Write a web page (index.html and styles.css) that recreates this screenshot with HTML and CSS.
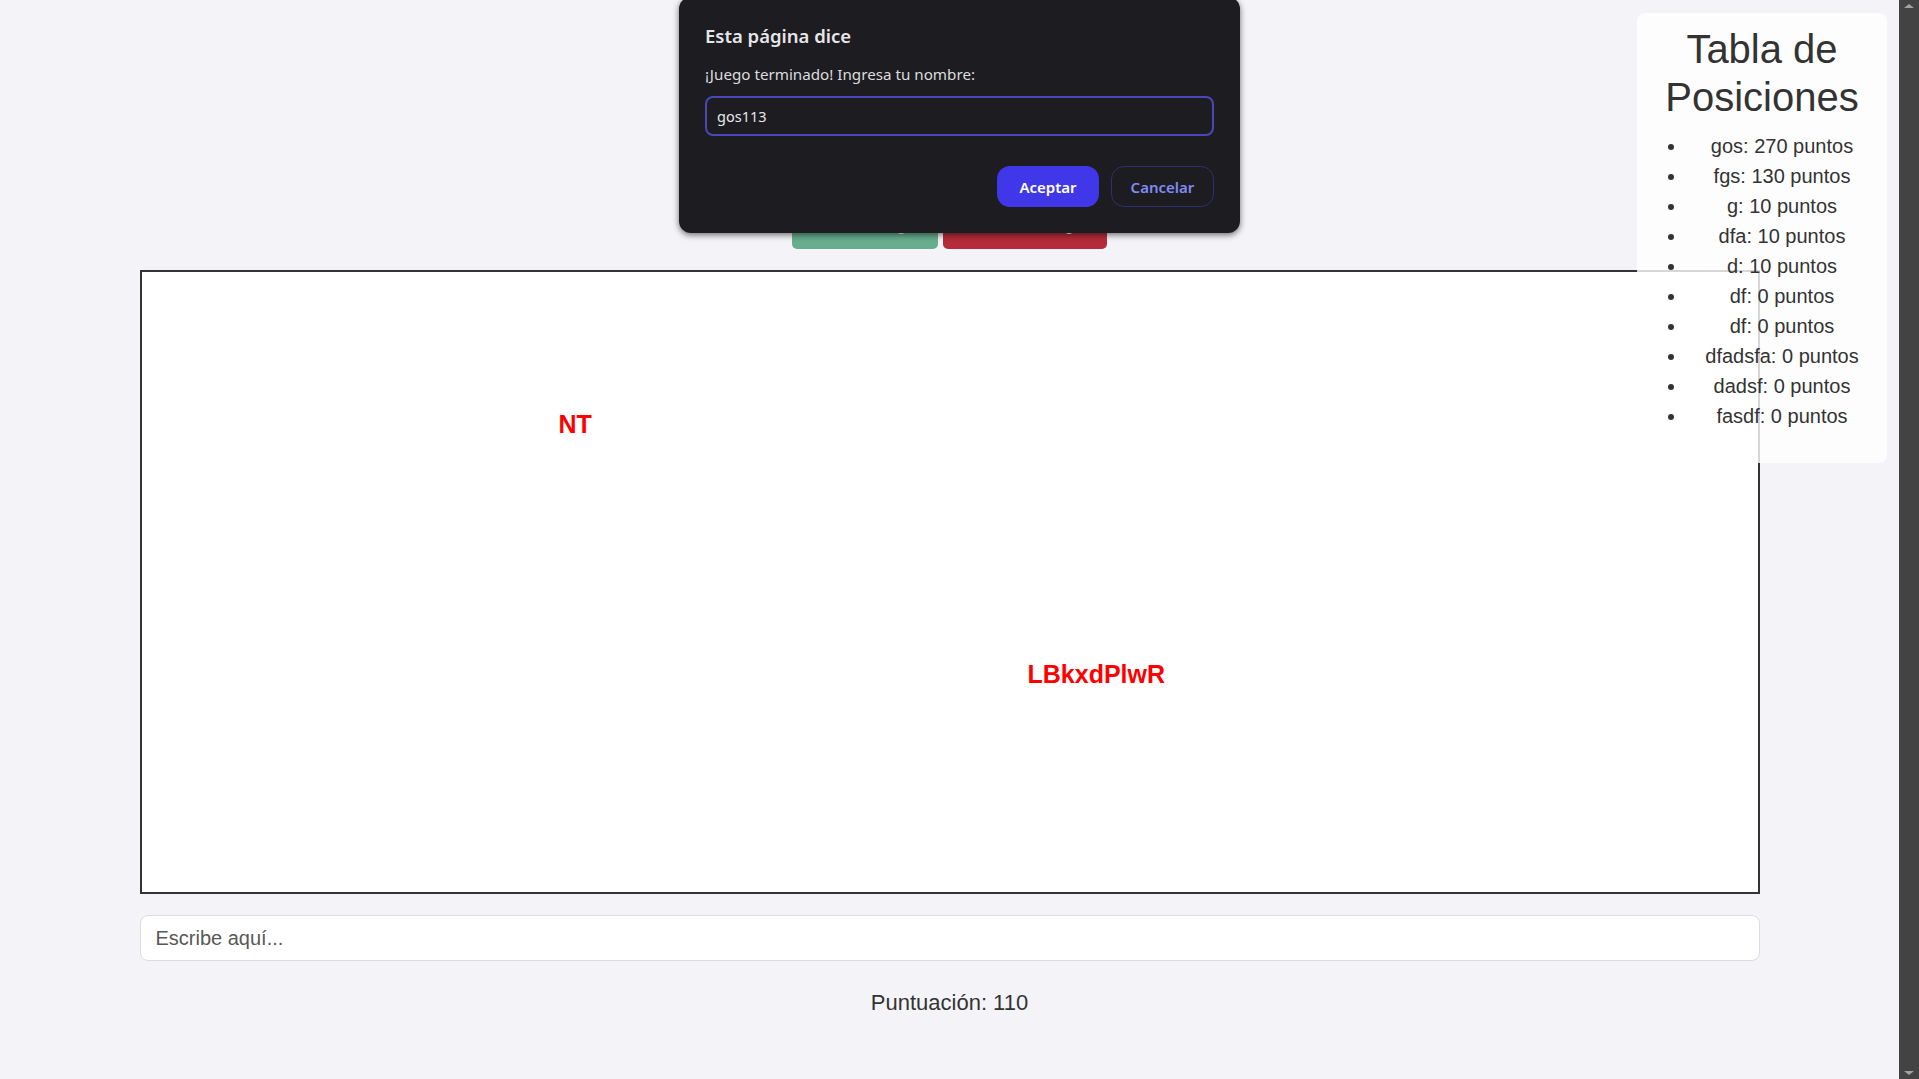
FILE: index.html
```html
<!DOCTYPE html>
<html lang="es">
<head>
<meta charset="utf-8">
<title>Juego de Mecanografía</title>
<link rel="stylesheet" href="styles.css">
</head>
<body>
<div class="page">
  <main class="main">
    <header class="header"></header>
    <div class="controls">
      <button class="btn btn-start">Iniciar Juego</button>
      <button class="btn btn-stop">Detener Juego</button>
    </div>
    <div class="game">
      <span class="word" style="left:417px;top:140px">NT</span>
      <span class="word" style="left:886px;top:390px">LBkxdPlwR</span>
    </div>
    <input class="typing" type="text" placeholder="Escribe aquí...">
    <p class="score">Puntuación: 110</p>

    <aside class="board">
      <h2 class="board-title">Tabla de Posiciones</h2>
      <ul class="board-list">
        <li>gos: 270 puntos</li>
        <li>fgs: 130 puntos</li>
        <li>g: 10 puntos</li>
        <li>dfa: 10 puntos</li>
        <li>d: 10 puntos</li>
        <li>df: 0 puntos</li>
        <li>df: 0 puntos</li>
        <li>dfadsfa: 0 puntos</li>
        <li>dadsf: 0 puntos</li>
        <li>fasdf: 0 puntos</li>
      </ul>
    </aside>

    <div class="dialog">
      <div class="dialog-title">Esta página dice</div>
      <div class="dialog-msg">¡Juego terminado! Ingresa tu nombre:</div>
      <div class="dialog-input">gos113</div>
      <div class="dialog-actions">
        <button class="dbtn dbtn-ok">Aceptar</button>
        <button class="dbtn dbtn-cancel">Cancelar</button>
      </div>
    </div>
  </main>
  <div class="scrollbar">
    <span class="arrow arrow-up"></span>
    <span class="arrow arrow-down"></span>
  </div>
</div>
</body>
</html>
```

FILE: styles.css
```css
html, body {
  margin: 0;
  padding: 0;
  height: 100%;
  overflow: hidden;
}

body {
  background: #f3f3f8;
  font-family: "Liberation Sans", Arial, sans-serif;
  color: #333;
}

.page {
  display: flex;
  height: 1079px;
}

.main {
  position: relative;
  flex: 1;
  display: flex;
  flex-direction: column;
  align-items: center;
}

.header {
  height: 207px;
  flex: 0 0 207px;
}

.controls {
  display: flex;
  gap: 5px;
}

.btn {
  height: 42px;
  box-sizing: border-box;
  border: none;
  border-radius: 5px;
  color: #fff;
  font-family: "Liberation Sans", Arial, sans-serif;
  font-size: 18px;
  padding: 0 0 7px;
}

.btn-start {
  width: 146px;
  background: #67ae8e;
}

.btn-stop {
  width: 164px;
  background: #b52b3b;
}

.game {
  position: relative;
  margin-top: 21px;
  width: 1620px;
  height: 624px;
  box-sizing: border-box;
  border: 2px solid #333;
  background: #fff;
}

.word {
  position: absolute;
  color: #ff0000;
  font-weight: bold;
  font-size: 25px;
  line-height: 1;
}

.typing {
  margin-top: 21px;
  width: 1620px;
  height: 46px;
  box-sizing: border-box;
  border: 1px solid #dcdce2;
  border-radius: 8px;
  background: #fff;
  padding: 0 15px;
  font-family: "Liberation Sans", Arial, sans-serif;
  font-size: 20px;
  color: #333;
  outline: none;
}

.typing::placeholder {
  color: #595959;
}

.score {
  margin: 29px 0 0;
  font-size: 22px;
  color: #333;
}

.board {
  position: absolute;
  top: 13px;
  right: 12px;
  width: 250px;
  box-sizing: border-box;
  padding: 12px 10px 16px;
  background: rgba(255, 255, 255, 0.8);
  border-radius: 8px;
}

.board-title {
  margin: 0;
  text-align: center;
  font-size: 40px;
  line-height: 48px;
  font-weight: normal;
  color: #333;
}

.board-list {
  margin: 10px 0 16px;
  padding-left: 40px;
  text-align: center;
  font-size: 20px;
  line-height: 30px;
}

.dialog {
  position: absolute;
  top: -3px;
  left: 679px;
  width: 561px;
  box-sizing: border-box;
  padding: 27px 26px 26px;
  background: #1c1c21;
  border-radius: 12px;
  box-shadow: 0 2px 6px rgba(0, 0, 0, 0.55);
  font-family: "Noto Sans", "Open Sans", sans-serif;
  color: #e6e6e8;
}

.dialog-title {
  font-size: 18.5px;
  font-weight: 600;
  line-height: 24px;
}

.dialog-msg {
  margin-top: 16px;
  font-size: 15.2px;
  line-height: 20px;
  color: #dcdcde;
}

.dialog-input {
  margin-top: 12px;
  height: 40px;
  box-sizing: border-box;
  border: 2px solid #4a47b8;
  border-radius: 8px;
  padding: 0 10px;
  display: flex;
  align-items: center;
  font-size: 14.5px;
  color: #e8e8ea;
}

.dialog-actions {
  margin-top: 30px;
  display: flex;
  justify-content: flex-end;
  gap: 12px;
}

.dbtn {
  height: 41px;
  box-sizing: border-box;
  border-radius: 13px;
  font-family: "Noto Sans", "Open Sans", sans-serif;
  font-size: 15px;
  font-weight: 600;
  padding: 0;
}

.dbtn-ok {
  width: 102px;
  background: #4038e8;
  border: none;
  color: #fff;
}

.dbtn-cancel {
  width: 103px;
  background: transparent;
  border: 1px solid #2e2f70;
  color: #7f8cf2;
}

.scrollbar {
  position: relative;
  width: 20px;
  flex: 0 0 20px;
  background: #434343;
}

.arrow {
  position: absolute;
  left: 5px;
  width: 0;
  height: 0;
  border-left: 5px solid transparent;
  border-right: 5px solid transparent;
}

.arrow-up {
  top: 4px;
  border-bottom: 4px solid #a3a3a3;
}

.arrow-down {
  bottom: 4px;
  border-top: 4px solid #a3a3a3;
}
```
